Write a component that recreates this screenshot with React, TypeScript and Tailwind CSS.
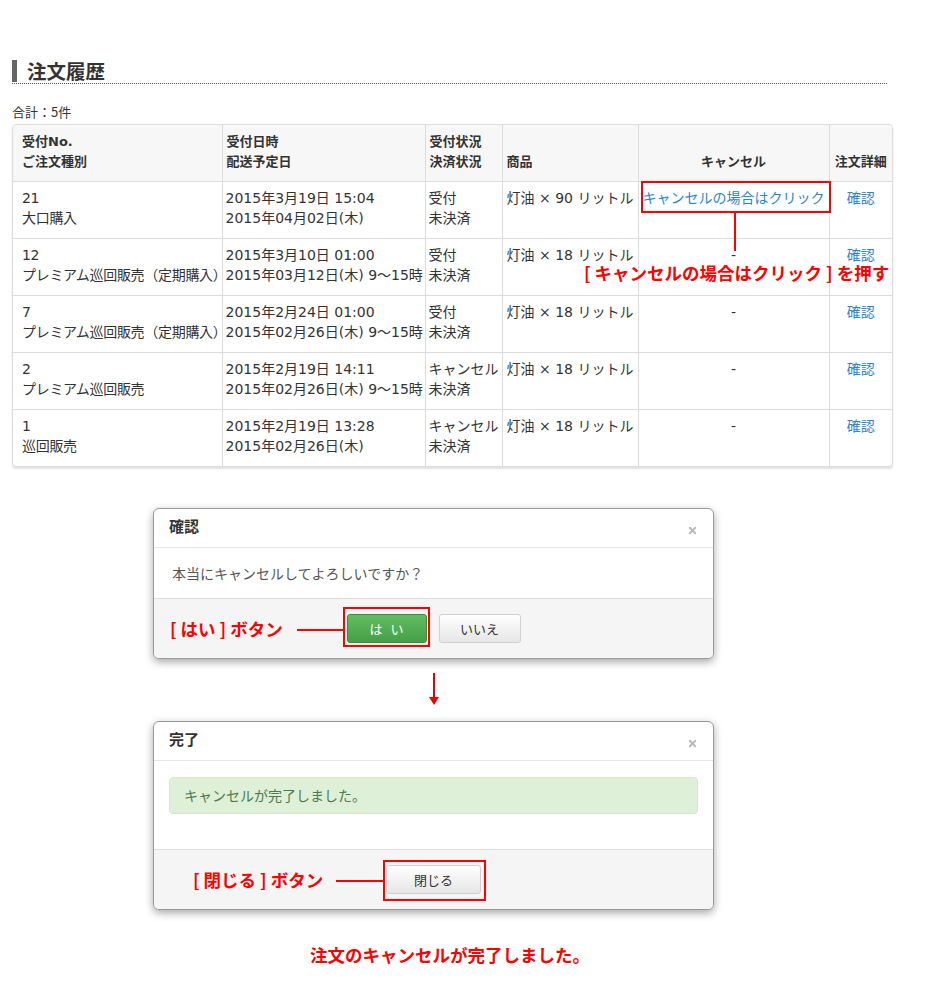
import { X } from "lucide-react";

const rows = [
  { no: "21", kind: "大口購入", date: "2015年3月19日 15:04", ship: "2015年04月02日(木)", st: "受付", pay: "未決済", item: "灯油 × 90 リットル", cancel: true },
  { no: "12", kind: "プレミアム巡回販売（定期購入）", date: "2015年3月10日 01:00", ship: "2015年03月12日(木) 9～15時", st: "受付", pay: "未決済", item: "灯油 × 18 リットル", cancel: false },
  { no: "7", kind: "プレミアム巡回販売（定期購入）", date: "2015年2月24日 01:00", ship: "2015年02月26日(木) 9～15時", st: "受付", pay: "未決済", item: "灯油 × 18 リットル", cancel: false },
  { no: "2", kind: "プレミアム巡回販売", date: "2015年2月19日 14:11", ship: "2015年02月26日(木) 9～15時", st: "キャンセル", pay: "未決済", item: "灯油 × 18 リットル", cancel: false },
  { no: "1", kind: "巡回販売", date: "2015年2月19日 13:28", ship: "2015年02月26日(木)", st: "キャンセル", pay: "未決済", item: "灯油 × 18 リットル", cancel: false },
];

const font = { fontFamily: '"DejaVu Sans", "Noto Sans CJK JP", sans-serif' };
const cjk = { fontFamily: '"Noto Sans CJK JP", sans-serif' };

function OrderTable() {
  return (
    <div className="relative">
      <div className="overflow-hidden rounded-[4px] border border-[#dcdcdc] shadow-[0_2px_2px_rgba(0,0,0,0.12)]">
        <table className="w-full table-fixed border-collapse text-[14px] leading-[20px] text-[#333]">
          <colgroup>
            <col className="w-[209px]" />
            <col className="w-[203px]" />
            <col className="w-[77px]" />
            <col className="w-[136px]" />
            <col className="w-[191px]" />
            <col />
          </colgroup>
          <thead>
            <tr className="h-[56px] bg-[#f7f7f7] text-[13px] font-bold">
              <th className="border-b border-[#dcdcdc] px-[9px] pb-[9px] text-left align-bottom">受付No.<br />ご注文種別</th>
              <th className="border-b border-l border-[#dcdcdc] px-[4px] pb-[9px] text-left align-bottom">受付日時<br />配送予定日</th>
              <th className="border-b border-l border-[#dcdcdc] px-[4px] pb-[9px] text-left align-bottom">受付状況<br />決済状況</th>
              <th className="border-b border-l border-[#dcdcdc] px-[4px] pb-[9px] text-left align-bottom">商品</th>
              <th className="border-b border-l border-[#dcdcdc] px-[4px] pb-[9px] text-center align-bottom">キャンセル</th>
              <th className="border-b border-l border-[#dcdcdc] px-[2px] pb-[9px] text-center align-bottom">注文詳細</th>
            </tr>
          </thead>
          <tbody>
            {rows.map((r, i) => (
              <tr key={i} className="h-[57px]">
                <td className={`px-[9px] pt-[6px] align-top whitespace-nowrap tracking-[-0.3px] ${i < 4 ? "border-b border-[#dcdcdc]" : ""}`}>{r.no}<br />{r.kind}</td>
                <td className={`border-l border-[#dcdcdc] px-[3px] pt-[6px] align-top whitespace-nowrap ${i < 4 ? "border-b" : ""}`}>{r.date}<br />{r.ship}</td>
                <td className={`border-l border-[#dcdcdc] px-[3px] pt-[6px] align-top whitespace-nowrap ${i < 4 ? "border-b" : ""}`}>{r.st}<br />{r.pay}</td>
                <td className={`border-l border-[#dcdcdc] px-[4px] pt-[6px] align-top whitespace-nowrap ${i < 4 ? "border-b" : ""}`}>{r.item}</td>
                <td className={`border-l border-[#dcdcdc] px-[2px] pt-[6px] text-center align-top whitespace-nowrap ${i < 4 ? "border-b" : ""}`}>
                  {r.cancel ? <span className="text-[#2a86cf]">キャンセルの場合はクリック</span> : "-"}
                </td>
                <td className={`border-l border-[#dcdcdc] px-[2px] pt-[6px] text-center align-top text-[#2a86cf] ${i < 4 ? "border-b" : ""}`}>確認</td>
              </tr>
            ))}
          </tbody>
        </table>
      </div>
      {/* annotation overlay */}
      <div className="pointer-events-none absolute left-[629px] top-[57px] h-[32px] w-[190px] border-2 border-[#f00]" />
      <div className="pointer-events-none absolute left-[722px] top-[88px] h-[39px] w-[2px] bg-[#f00]" />
      <div className="pointer-events-none absolute left-[572px] top-[138px] whitespace-nowrap text-[17.5px] font-bold leading-[22px] text-[#f00]" style={cjk}>
        [ キャンセルの場合はクリック ] を押す
      </div>
    </div>
  );
}

function Boxed({ children, box }: { children: React.ReactNode; box: string }) {
  return (
    <span className="relative">
      {children}
      <span className={`pointer-events-none absolute border-2 border-[#f00] ${box}`} />
    </span>
  );
}

function Dialog({ title, children, footer, label, labelLeft, lineLeft, lineW }: {
  title: string;
  children: React.ReactNode;
  footer: React.ReactNode;
  label: string;
  labelLeft: number;
  lineLeft: number;
  lineW: number;
}) {
  return (
    <div className="ml-[153px] w-[561px] overflow-hidden rounded-[6px] border border-[#9a9a9a] bg-white shadow-[0_3px_8px_rgba(0,0,0,0.35)]">
      <div className="flex h-[39px] items-center justify-between border-b border-[#e5e5e5] pl-[15px] pr-[15px]">
        <span className="mt-[-3px] text-[15px] font-bold text-[#333]" style={cjk}>{title}</span>
        <X className="mt-[5px] size-[11px] text-[#b8b8b8]" strokeWidth={4} />
      </div>
      {children}
      <div className="relative flex h-[60px] items-center justify-center gap-[12px] border-t border-[#dedede] bg-[#f5f5f5]">
        {footer}
        <span className="absolute top-[19px] whitespace-nowrap text-[17.5px] font-bold leading-[22px] text-[#f00]" style={{ ...cjk, left: labelLeft }}>{label}</span>
        <span className="absolute top-[30px] h-[2px] bg-[#f00]" style={{ left: lineLeft, width: lineW }} />
      </div>
    </div>
  );
}

export default function App() {
  return (
    <div className="min-h-[1000px] w-[950px] bg-white pt-[60px] text-[#333]" style={font}>
      <div className="mx-[12px] w-[875px]">
        <div className="flex items-center border-b border-dotted border-[#555] pb-[1px]">
          <span className="h-[22px] w-[5px] bg-[#666]" />
          <h1 className="ml-[10px] text-[19.5px] font-bold leading-[22px] text-[#333]" style={cjk}>注文履歴</h1>
        </div>
      </div>
      <div className="mx-[12px] mt-[19px] text-[13px] leading-[18px]" style={cjk}>合計：5件</div>
      <div className="mx-[12px] mt-[3px] w-[881px]">
        <OrderTable />
      </div>

      <div className="mt-[41px]">
        <Dialog
          title="確認"
          label="[ はい ] ボタン"
          labelLeft={16}
          lineLeft={143}
          lineW={47}
          footer={
            <>
              <Boxed box="-left-[4px] -right-[3px] -top-[7px] -bottom-[4px]">
                <button className="h-[29px] w-[80px] rounded-[3px] border border-[#3d8b3d] bg-gradient-to-b from-[#62bd62] to-[#459f45] pl-[8px] text-[13px] tracking-[8px] text-white" style={cjk}>はい</button>
              </Boxed>
              <button className="h-[29px] w-[82px] rounded-[3px] border border-[#cfcfcf] bg-gradient-to-b from-white to-[#e6e6e6] text-[13px] text-[#333]" style={cjk}>いいえ</button>
            </>
          }
        >
          <div className="flex h-[50px] items-center pl-[18px] text-[14px] text-[#555]" style={cjk}>本当にキャンセルしてよろしいですか？</div>
        </Dialog>
      </div>

      <div className="ml-[428px] mt-[14px] flex w-[11px] flex-col items-center">
        <span className="h-[24px] w-[2px] bg-[#e00]" />
        <span className="h-0 w-0 border-x-[5px] border-t-[8px] border-x-transparent border-t-[#e00]" />
      </div>

      <div className="mt-[16px]">
        <Dialog
          title="完了"
          label="[ 閉じる ] ボタン"
          labelLeft={39}
          lineLeft={182}
          lineW={47}
          footer={
            <Boxed box="-left-[3px] -right-[5px] -top-[5px] -bottom-[7px]">
              <button className="h-[29px] w-[95px] rounded-[3px] border border-[#cfcfcf] bg-gradient-to-b from-white to-[#e6e6e6] text-[13px] text-[#333]" style={cjk}>閉じる</button>
            </Boxed>
          }
        >
          <div className="h-[88px] px-[15px] pt-[16px]">
            <div className="flex h-[37px] items-center rounded-[4px] border border-[#d6e9c6] bg-[#dff0d8] pl-[14px] text-[14px] text-[#4b7a4b]" style={cjk}>キャンセルが完了しました。</div>
          </div>
        </Dialog>
      </div>

      <div className="mt-[34px] pl-[310px] text-[17.5px] font-bold leading-[22px] text-[#f00]" style={cjk}>注文のキャンセルが完了しました。</div>
    </div>
  );
}
